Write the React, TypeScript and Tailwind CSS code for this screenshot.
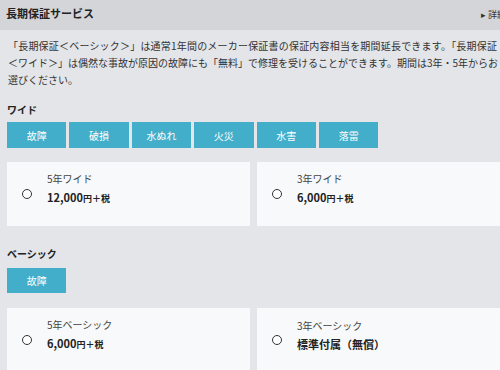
const wideTags = ["故障", "破損", "水ぬれ", "火災", "水害", "落雷"];

const widePlans = [
  { id: "w5", title: "5年ワイド", price: "12,000", unit: "円＋税" },
  { id: "w3", title: "3年ワイド", price: "6,000", unit: "円＋税" },
];

const basicPlans = [
  { id: "b5", title: "5年ベーシック", price: "6,000", unit: "円＋税" },
  { id: "b3", title: "3年ベーシック", price: "標準付属（無償）", unit: "" },
];

type Plan = { id: string; title: string; price: string; unit: string };

function Tag({ label, h }: { label: string; h: string }) {
  return (
    <div className={`w-[59.4px] ${h} bg-[#42aec9] text-white text-[10px] flex items-center justify-center`}>
      {label}
    </div>
  );
}

function PlanCard({ plan }: { plan: Plan }) {
  return (
    <label className="h-[64px] bg-[#f8f9fa] flex items-center pl-[15px] cursor-pointer">
      <span className="w-[10px] h-[10px] rounded-full border-[1.5px] border-[#333] bg-white shrink-0" />
      <div className="ml-[15px] pb-[10px]">
        <p className="text-[10px] leading-[16px] text-[#444]">{plan.title}</p>
        <p className="leading-[16px] font-bold text-[#222]">
          <span className="text-[11px]">{plan.price}</span>
          {plan.unit && <span className="text-[9px]">{plan.unit}</span>}
        </p>
      </div>
    </label>
  );
}

export default function App() {
  return (
    <div
      className="w-[500px] h-[370px] overflow-hidden bg-[#e3e5e9]"
      style={{ fontFamily: '"Noto Sans CJK JP", "Noto Sans", sans-serif' }}
    >
      <div className="w-[518px]">
        {/* Header */}
        <header className="h-[30px] bg-[#d4d5d8] flex justify-between items-start px-[6px] pt-[5px]">
          <h1 className="text-[11px] leading-[16px] font-bold text-[#222]">長期保証サービス</h1>
          <span className="text-[9px] leading-[16px] text-[#333] pr-[6px] pt-[2px]">▸ 詳細</span>
        </header>

        <main className="px-[7px]">
          <p className="mt-[7px] text-[10px] leading-[17px] text-[#333] pl-[1px]">
            <span className="tracking-[0.2px]">
              「長期保証＜ベーシック＞」は通常1年間のメーカー保証書の保証内容相当を期間延長できます。「長期保証
            </span>
            <br />
            ＜ワイド＞」は偶然な事故が原因の故障にも「無料」で修理を受けることができます。期間は3年・5年からお
            <br />
            選びください。
          </p>

          {/* Wide */}
          <h2 className="mt-[15px] text-[10px] leading-[14px] font-bold text-[#222]">ワイド</h2>
          <div className="mt-[5px] flex gap-[3px]">
            {wideTags.map((t) => (
              <Tag key={t} label={t} h="h-[26px]" />
            ))}
          </div>
          <div className="mt-[14px] grid grid-cols-[243px_243px] gap-[7px]">
            {widePlans.map((p) => (
              <PlanCard key={p.id} plan={p} />
            ))}
          </div>

          {/* Basic */}
          <h2 className="mt-[21px] text-[10px] leading-[14px] font-bold text-[#222]">ベーシック</h2>
          <div className="mt-[7px] flex">
            <Tag label="故障" h="h-[25px]" />
          </div>
          <div className="mt-[15px] grid grid-cols-[243px_243px] gap-[7px]">
            {basicPlans.map((p) => (
              <PlanCard key={p.id} plan={p} />
            ))}
          </div>
        </main>
      </div>
    </div>
  );
}
